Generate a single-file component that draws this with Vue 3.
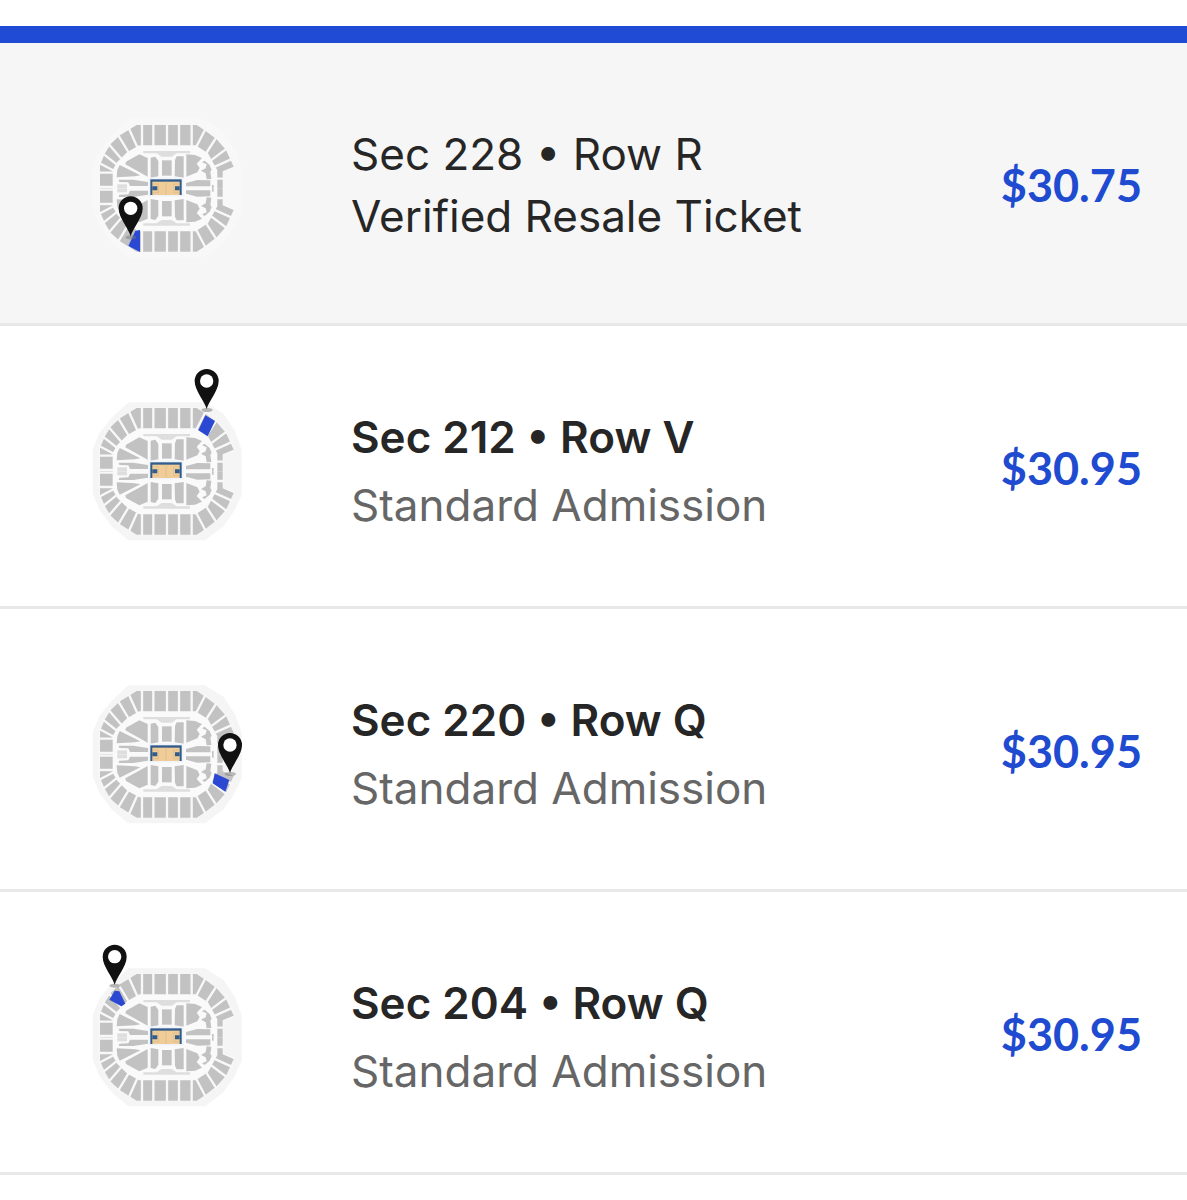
<script setup>
const tickets = [
  {
    section: '228', row: 'R', type: 'Verified Resale Ticket', price: '$30.75', active: true,
    seat: '166,362 180,360 180,426 145,408', pin: [152, 295]
  },
  {
    section: '212', row: 'V', type: 'Standard Admission', price: '$30.95',
    seat: '376,67 405,84 383,130 355,112', pin: [380, -36]
  },
  {
    section: '220', row: 'Q', type: 'Standard Admission', price: '$30.95',
    seat: '404,292 448,312 436,347 398,322', pin: [450, 207]
  },
  {
    section: '204', row: 'Q', type: 'Standard Admission', price: '$30.95',
    seat: '104,95 118,97 136,134 124,142 88,122', pin: [104, -7]
  }
]

// The bowl is symmetric: each half is drawn once and flipped across the court's centre line.
const halves = ['', 'translate(0 470) scale(1 -1)']
</script>

<template>
  <main class="page">
    <div class="accent"></div>
    <ul class="tickets">
      <li v-for="t in tickets" :key="t.section" class="ticket" :class="{ active: t.active }">
        <svg class="map" viewBox="0 -201 540 840" role="img" :aria-label="`Seat map, section ${t.section}`">
          <polygon class="ground" points="145,28 375,28 430,62 465,115 485,170 485,305 462,355 430,400 375,442 145,442 95,400 58,350 38,300 38,170 58,120 95,75" />
          <g v-for="(flip, i) in halves" :key="i" :transform="flip">
            <polygon class="lane" points="170,45 350,45 410,86 440,122 462,175 430,185 430,235 58,235 58,170 75,130 115,80" />
            <polygon class="seat" points="170,45 350,45 376,62 410,88 438,120 461,170 428,184 428,235 412,235 412,181 402,163 384,130 347,106 178,106 142,126 112,155 98,180 98,235 60,235 60,165 75,130 92,102 120,76" />
            <path class="aisle" d="M186 42V109M220 42V109M261 42V109M297 42V109M335 42V109M376 58L349 110M408 84L377 132M440 116L392 152M460 145L400 172M147 56L172 112M115 76L145 126M86 102L124 146M68 130L112 165M56 158L102 182M56 188H100M56 231H100M408 206H432" />
            <path class="shade" d="M190 123H330V130H290L275 140H245L230 130H190Z" />
            <g class="seat">
              <polygon points="178,133 203,144 203,200 136,163 138,155" />
              <polygon points="119,165 181,196 165,199 110,202 112,180" />
              <polygon points="212,143 226,140 235,153 235,199 212,203" />
              <rect x="246" y="151" width="29" height="46" />
              <polygon points="285,150 290,139 311,139 311,203 284,199" />
              <polygon points="319,133 345,135 366,144 350,161 359,174 352,187 319,200" />
              <polygon points="374,152 389,165 395,179 391,185 394,207 380,208 377,190 363,182 377,175 380,163 366,157" />
              <polygon points="116,209 160,209 204,216 204,228 150,228 145,217 118,216" />
              <polygon points="318,219 352,210 391,211 391,229 318,229" />
              <rect x="396" y="225" width="5" height="10" />
            </g>
            <path class="shade" d="M112 223H141V235H112Z" />
          </g>
          <rect class="halo" x="206" y="203" width="104" height="57" />
          <rect class="court" x="211" y="208" width="94" height="47" />
          <rect class="floor" x="217" y="215" width="82" height="40" />
          <path class="court" d="M217 229H232V241H217ZM299 229H285V241H299Z" />
          <path class="hoop" d="M258 215V255M220 222H235V248H220M297 222H281V248H297" />
          <polygon class="chosen" :points="t.seat" />
          <g :transform="`translate(${t.pin[0]} ${t.pin[1]})`">
            <ellipse class="shadow" cx="1" cy="87" rx="17" ry="6" />
            <path class="pin" d="M0 84C-6 61-36 29-36 0A36 36 0 0 1 36 0C36 29 6 61 0 84Z" />
            <circle class="eye" r="20" />
          </g>
        </svg>
        <div class="details">
          <h2 class="place">Sec {{ t.section }} • Row {{ t.row }}</h2>
          <p class="type">{{ t.type }}</p>
        </div>
        <strong class="price">{{ t.price }}</strong>
      </li>
    </ul>
  </main>
</template>

<style>
body {
  margin: 0;
  background: #fff;
}
</style>

<style scoped>
.page {
  padding-top: 26px;
  font-family: Inter, "Open Sans", sans-serif;
  font-size: 44px;
  line-height: 62px;
  color: #262626;
}
.accent {
  height: 17px;
  background: #1f4bd5;
}
.tickets {
  list-style: none;
  margin: 0;
  padding: 0;
}
.ticket {
  display: flex;
  align-items: center;
  padding: 0 45px 0 80px;
  border-bottom: 3px solid #e8e8e8;
}
.active {
  background: #f6f6f6;
}
.map {
  flex: none;
  width: 180px;
  height: 280px;
}
.details {
  flex: 1;
  align-self: flex-start;
  margin-left: 91px;
  padding-top: 80px;
}
.place,
.type {
  margin: 0;
  font-size: inherit;
}
.place {
  font-weight: 600;
}
.type {
  margin-top: 6px;
  color: #666;
}
.active .place {
  font-weight: 400;
}
.active .type {
  margin-top: 0;
  color: inherit;
}
.price {
  padding-top: 4px;
  font-family: Lato, "Open Sans", sans-serif;
  font-size: 45px;
  font-weight: 700;
  color: #1f4bd0;
}
.ground { fill: #f5f5f5; }
.active .ground { fill: #f8f8f8; }
.lane { fill: #fafafa; }
.seat { fill: #c2c2c2; }
.aisle { fill: none; stroke: #f8f8f8; stroke-width: 7; }
.shade { fill: #dedede; }
.halo { fill: #f0f3f8; }
.court { fill: #315b8b; }
.floor { fill: #efcc98; }
.hoop { fill: none; stroke: #dbb98a; stroke-width: 2; }
.chosen { fill: #2a48d2; }
.shadow { fill: #777; opacity: 0.5; }
.pin { fill: #111; }
.eye { fill: #fff; }
</style>
